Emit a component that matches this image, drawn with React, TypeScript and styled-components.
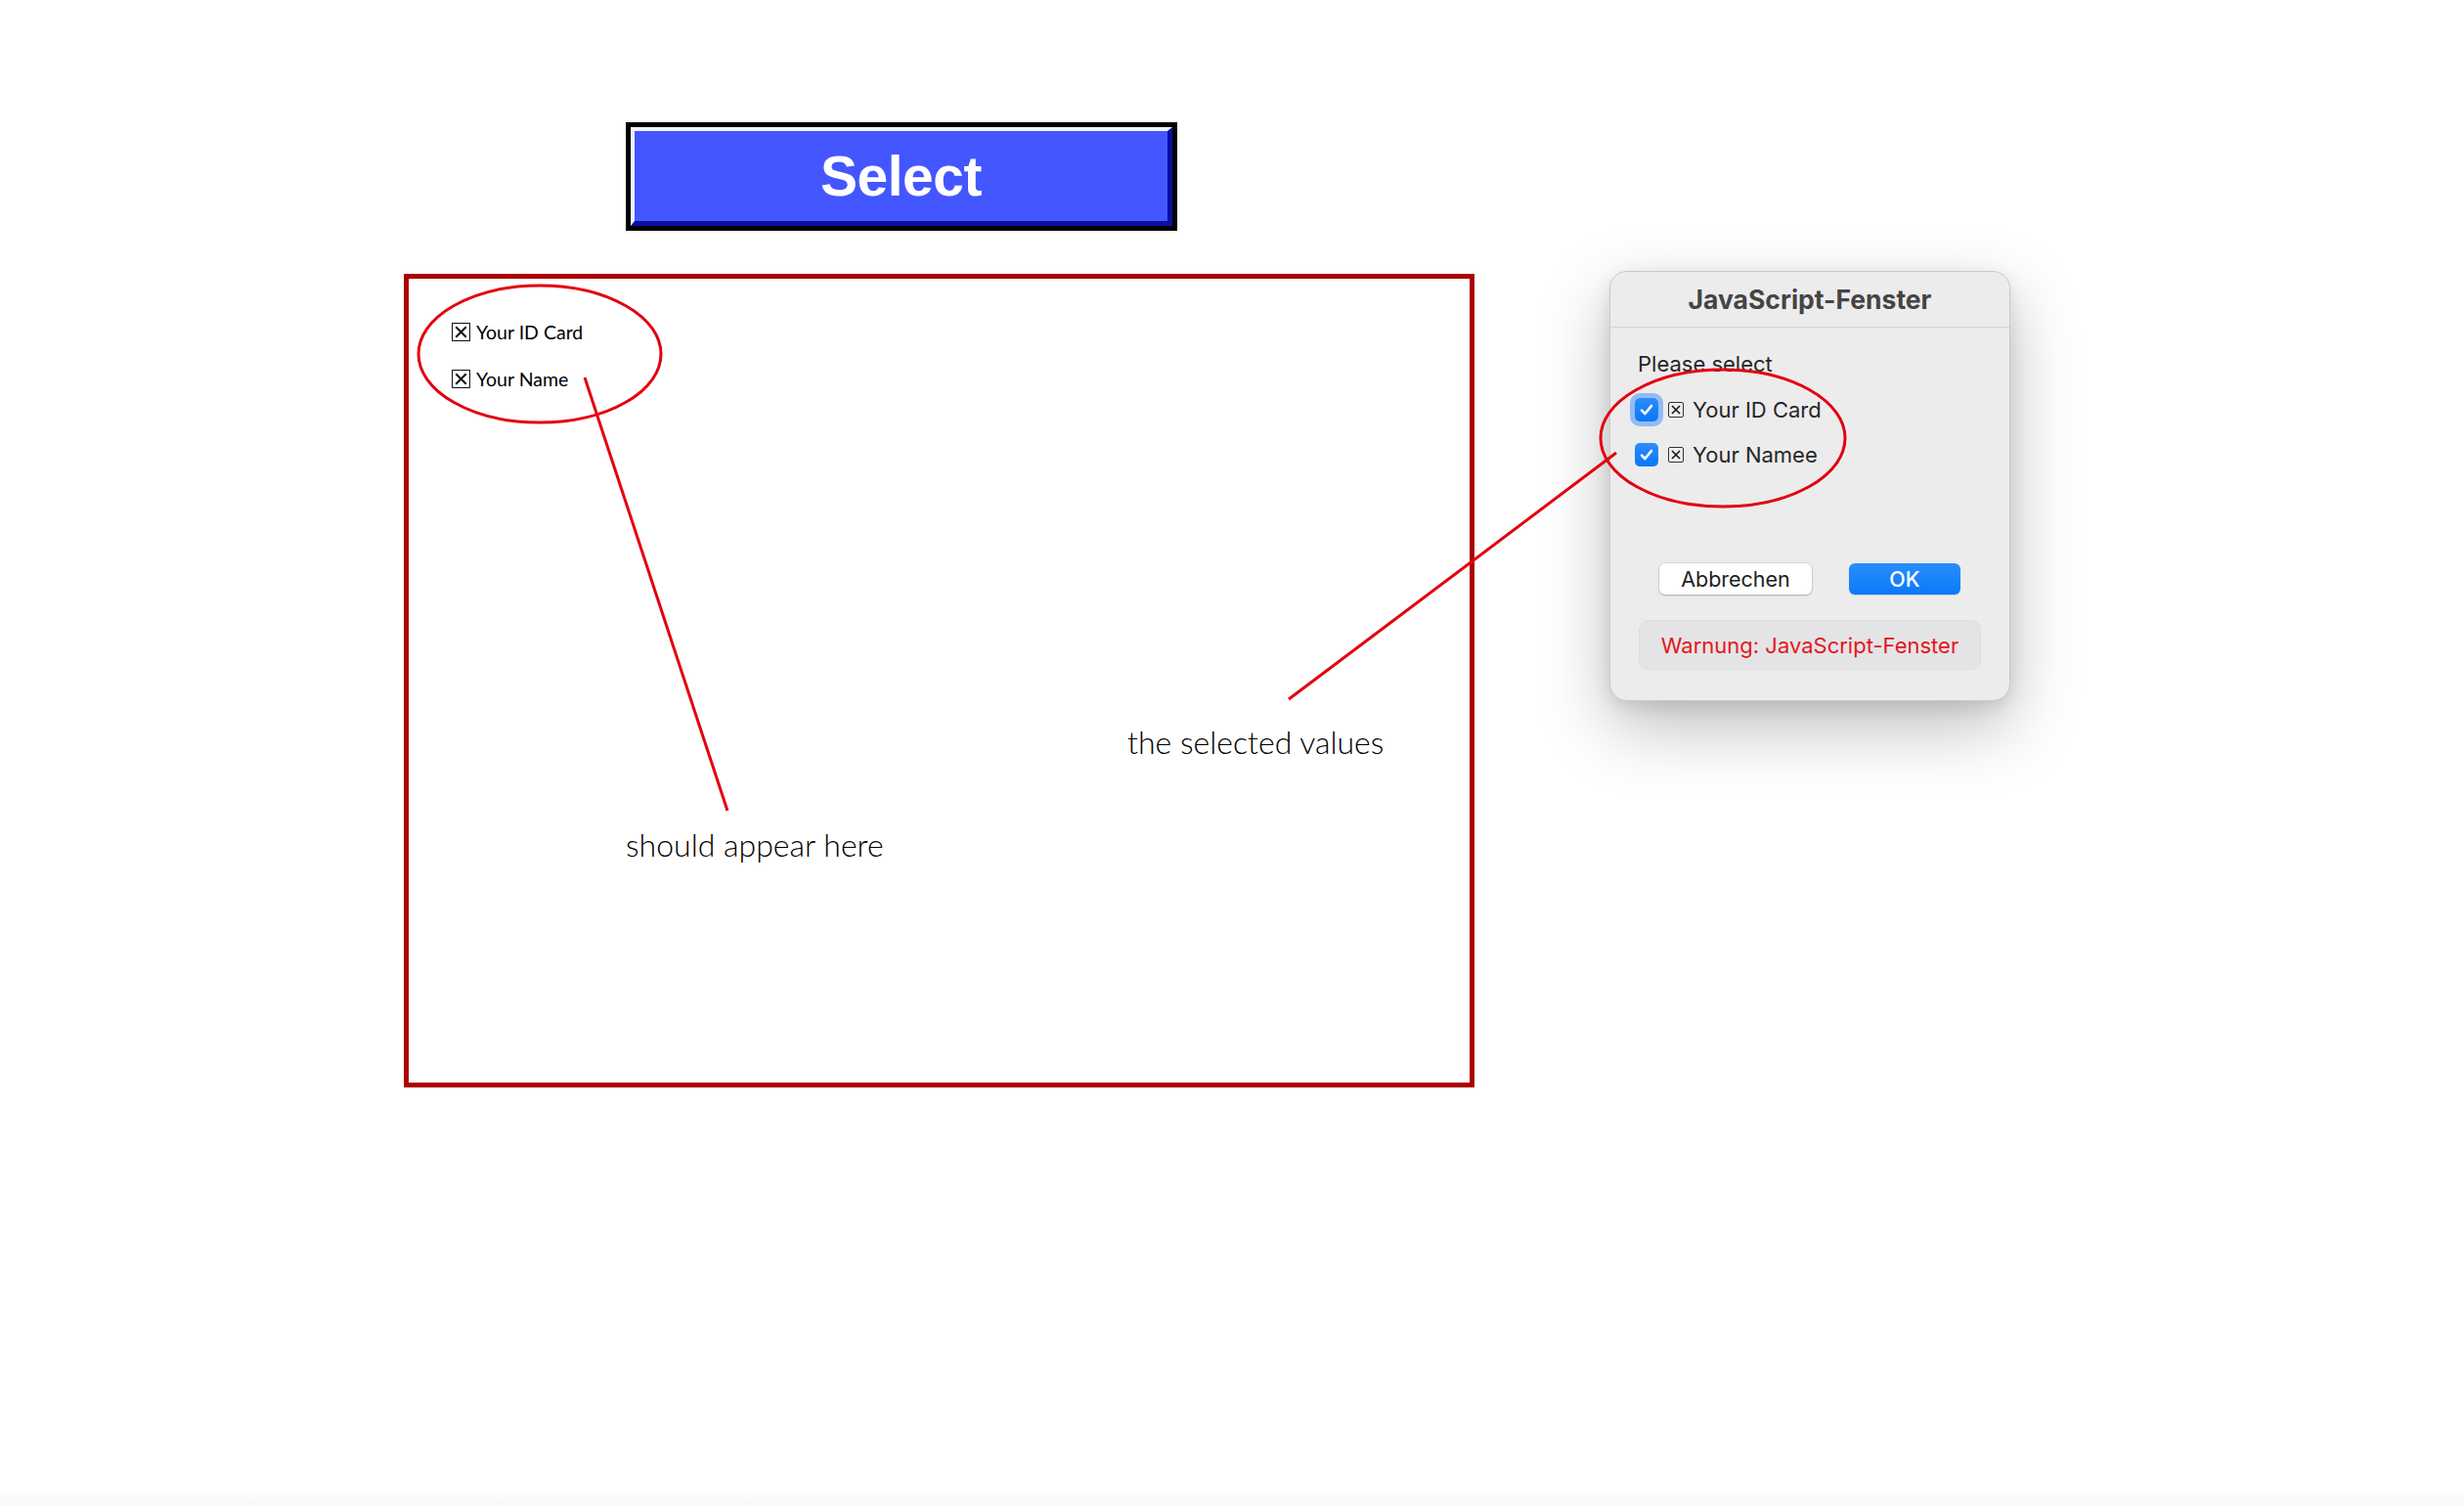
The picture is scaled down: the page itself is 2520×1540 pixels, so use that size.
import React from "react";
import styled, { createGlobalStyle } from "styled-components";

const GlobalStyle = createGlobalStyle`
  html, body {
    margin: 0;
    padding: 0;
    background: #ffffff;
  }
  body {
    font-family: "Liberation Sans", Arial, sans-serif;
  }
`;

const Page = styled.div`
  position: relative;
  box-sizing: border-box;
  width: 2520px;
  height: 1540px;
  overflow: hidden;
  display: flex;
  align-items: flex-start;
  gap: 138px;
  padding: 125px 0 0 413px;
  background: linear-gradient(to bottom, #ffffff 0, #ffffff 1522px, #f8f8f8 1540px);
`;

const LeftColumn = styled.div`
  display: flex;
  flex-direction: column;
  gap: 44px;
`;

const SelectFrame = styled.div`
  box-sizing: border-box;
  width: 564px;
  height: 111px;
  margin-left: 227px;
  border: 5px solid #000;
  display: flex;
`;

const SelectButton = styled.button`
  flex: 1;
  margin: 0;
  border-style: solid;
  border-width: 4px 5px 5px 4px;
  border-color: #f2f2ff #0c0ea0 #0c0ea0 #f2f2ff;
  background: #4356ff;
  color: #fff;
  font-family: "Liberation Sans", Arial, sans-serif;
  font-weight: 700;
  font-size: 57px;
  letter-spacing: -0.5px;
  cursor: pointer;
`;

const OutputBox = styled.div`
  position: relative;
  box-sizing: border-box;
  width: 1095px;
  height: 832px;
  border: 5px solid #ab0000;
  padding: 45px 0 0 44px;
`;

const OptionList = styled.div`
  display: flex;
  flex-direction: column;
  gap: 29px;
`;

const OptionRow = styled.div`
  display: flex;
  align-items: center;
  height: 19px;
  gap: 6px;
`;

const CrossBox = styled.span<{ $size: number; $line: number; $color: string }>`
  box-sizing: border-box;
  display: inline-flex;
  align-items: center;
  justify-content: center;
  width: ${(p) => p.$size}px;
  height: ${(p) => p.$size}px;
  border: ${(p) => p.$line}px solid ${(p) => p.$color};
  border-radius: ${(p) => (p.$size < 17 ? 2 : 0)}px;
  flex-shrink: 0;
`;

const OptionLabel = styled.span`
  font-family: Lato, "Open Sans", sans-serif;
  font-size: 19.5px;
  font-weight: 400;
  color: #000;
  line-height: 19px;
`;

const Note = styled.span<{ $left: number; $top: number }>`
  position: absolute;
  left: ${(p) => p.$left}px;
  top: ${(p) => p.$top}px;
  font-family: Lato, "Open Sans", sans-serif;
  font-size: 32px;
  font-weight: 300;
  line-height: 30px;
  color: #000;
  white-space: nowrap;
`;

const Dialog = styled.div`
  box-sizing: border-box;
  width: 410px;
  margin-top: 152px;
  background: #ececed;
  border: 1px solid #c9c9cb;
  border-radius: 18px;
  box-shadow: 0 26px 70px rgba(0, 0, 0, 0.26), 0 6px 18px rgba(0, 0, 0, 0.1);
  display: flex;
  flex-direction: column;
  padding-bottom: 31px;
  font-family: Inter, "Noto Sans", sans-serif;
`;

const TitleBar = styled.div`
  height: 56px;
  display: flex;
  align-items: center;
  justify-content: center;
  border-bottom: 1px solid #d3d3d5;
  font-weight: 700;
  font-size: 26.5px;
  color: #444;
`;

const DialogBody = styled.div`
  display: flex;
  flex-direction: column;
  padding: 24px 25px 0 25px;
`;

const Prompt = styled.div`
  padding-left: 3px;
  font-size: 22px;
  line-height: 26px;
  color: #262626;
`;

const CheckList = styled.div`
  display: flex;
  flex-direction: column;
  gap: 16px;
  margin-top: 19px;
`;

const CheckRow = styled.label`
  display: flex;
  align-items: center;
  height: 30px;
  font-size: 22px;
  color: #262626;
`;

const CheckBox = styled.span<{ $focused?: boolean }>`
  display: inline-flex;
  align-items: center;
  justify-content: center;
  width: 24px;
  height: 24px;
  border-radius: 5px;
  background: linear-gradient(#2b8cff, #0a78f6);
  box-shadow: ${(p) => (p.$focused ? "0 0 0 5px rgba(40, 128, 250, 0.45)" : "none")};
  margin-right: 10px;
  flex-shrink: 0;
`;

const RowText = styled.span`
  margin-left: 9px;
`;

const ButtonRow = styled.div`
  display: flex;
  justify-content: center;
  gap: 38px;
  margin-top: 96px;
`;

const DialogButton = styled.button<{ $primary?: boolean; $width: number }>`
  width: ${(p) => p.$width}px;
  height: 32px;
  border: none;
  border-radius: 6px;
  font-family: Inter, "Noto Sans", sans-serif;
  font-size: 21.5px;
  font-weight: ${(p) => (p.$primary ? 500 : 400)};
  color: ${(p) => (p.$primary ? "#fff" : "#222")};
  background: ${(p) => (p.$primary ? "linear-gradient(#2a8dff, #0a79f7)" : "#fff")};
  box-shadow: ${(p) =>
    p.$primary
      ? "0 1px 1px rgba(0, 0, 0, 0.12)"
      : "0 0 0 0.5px rgba(0, 0, 0, 0.15), 0 1px 2px rgba(0, 0, 0, 0.22)"};
`;

const Warning = styled.div`
  box-sizing: border-box;
  width: 350px;
  height: 51px;
  margin: 26px auto 0;
  display: flex;
  align-items: center;
  justify-content: center;
  background: #e4e4e6;
  border: 1px solid #dddddf;
  border-radius: 10px;
  color: #e5161c;
  font-size: 22px;
`;

const Overlay = styled.svg`
  position: absolute;
  left: 0;
  top: 0;
  pointer-events: none;
  z-index: 5;
`;

const XMark = ({ size, stroke }: { size: number; stroke: number }) => (
  <svg width={size} height={size} viewBox="0 0 10 10">
    <path d="M1.5 1.5 L8.5 8.5 M8.5 1.5 L1.5 8.5" stroke="#111" strokeWidth={stroke} strokeLinecap="square" />
  </svg>
);

const Check = () => (
  <svg width="16" height="16" viewBox="0 0 16 16">
    <path d="M3 8.6 L6.4 12 L13 4" fill="none" stroke="#fff" strokeWidth="2.6" strokeLinecap="round" strokeLinejoin="round" />
  </svg>
);

const options = ["Your ID Card", "Your Name"];
const dialogOptions = [
  { label: "Your ID Card", focused: true },
  { label: "Your Namee", focused: false },
];

export default function App() {
  return (
    <>
      <GlobalStyle />
      <Page>
        <LeftColumn>
          <SelectFrame>
            <SelectButton>Select</SelectButton>
          </SelectFrame>
          <OutputBox>
            <OptionList>
              {options.map((o) => (
                <OptionRow key={o}>
                  <CrossBox $size={19} $line={1.5} $color="#111">
                    <XMark size={13} stroke={1.6} />
                  </CrossBox>
                  <OptionLabel>{o}</OptionLabel>
                </OptionRow>
              ))}
            </OptionList>
            <Note $left={222} $top={564}>should appear here</Note>
            <Note $left={735} $top={459}>the selected values</Note>
          </OutputBox>
        </LeftColumn>

        <Dialog>
          <TitleBar>JavaScript-Fenster</TitleBar>
          <DialogBody>
            <Prompt>Please select</Prompt>
            <CheckList>
              {dialogOptions.map((o) => (
                <CheckRow key={o.label}>
                  <CheckBox $focused={o.focused}>
                    <Check />
                  </CheckBox>
                  <CrossBox $size={16} $line={1.5} $color="#333">
                    <XMark size={10} stroke={1.5} />
                  </CrossBox>
                  <RowText>{o.label}</RowText>
                </CheckRow>
              ))}
            </CheckList>
            <ButtonRow>
              <DialogButton $width={156}>Abbrechen</DialogButton>
              <DialogButton $width={114} $primary>
                OK
              </DialogButton>
            </ButtonRow>
            <Warning>Warnung: JavaScript-Fenster</Warning>
          </DialogBody>
        </Dialog>

        <Overlay width="2520" height="1540" viewBox="0 0 2520 1540">
          <g fill="none" stroke="#e3000f" strokeWidth="3">
            <ellipse cx="552" cy="362" rx="124" ry="70" />
            <line x1="598" y1="386" x2="744" y2="829" />
            <ellipse cx="1762" cy="448" rx="125" ry="70" />
            <line x1="1318" y1="715" x2="1653" y2="463" />
          </g>
        </Overlay>
      </Page>
    </>
  );
}
